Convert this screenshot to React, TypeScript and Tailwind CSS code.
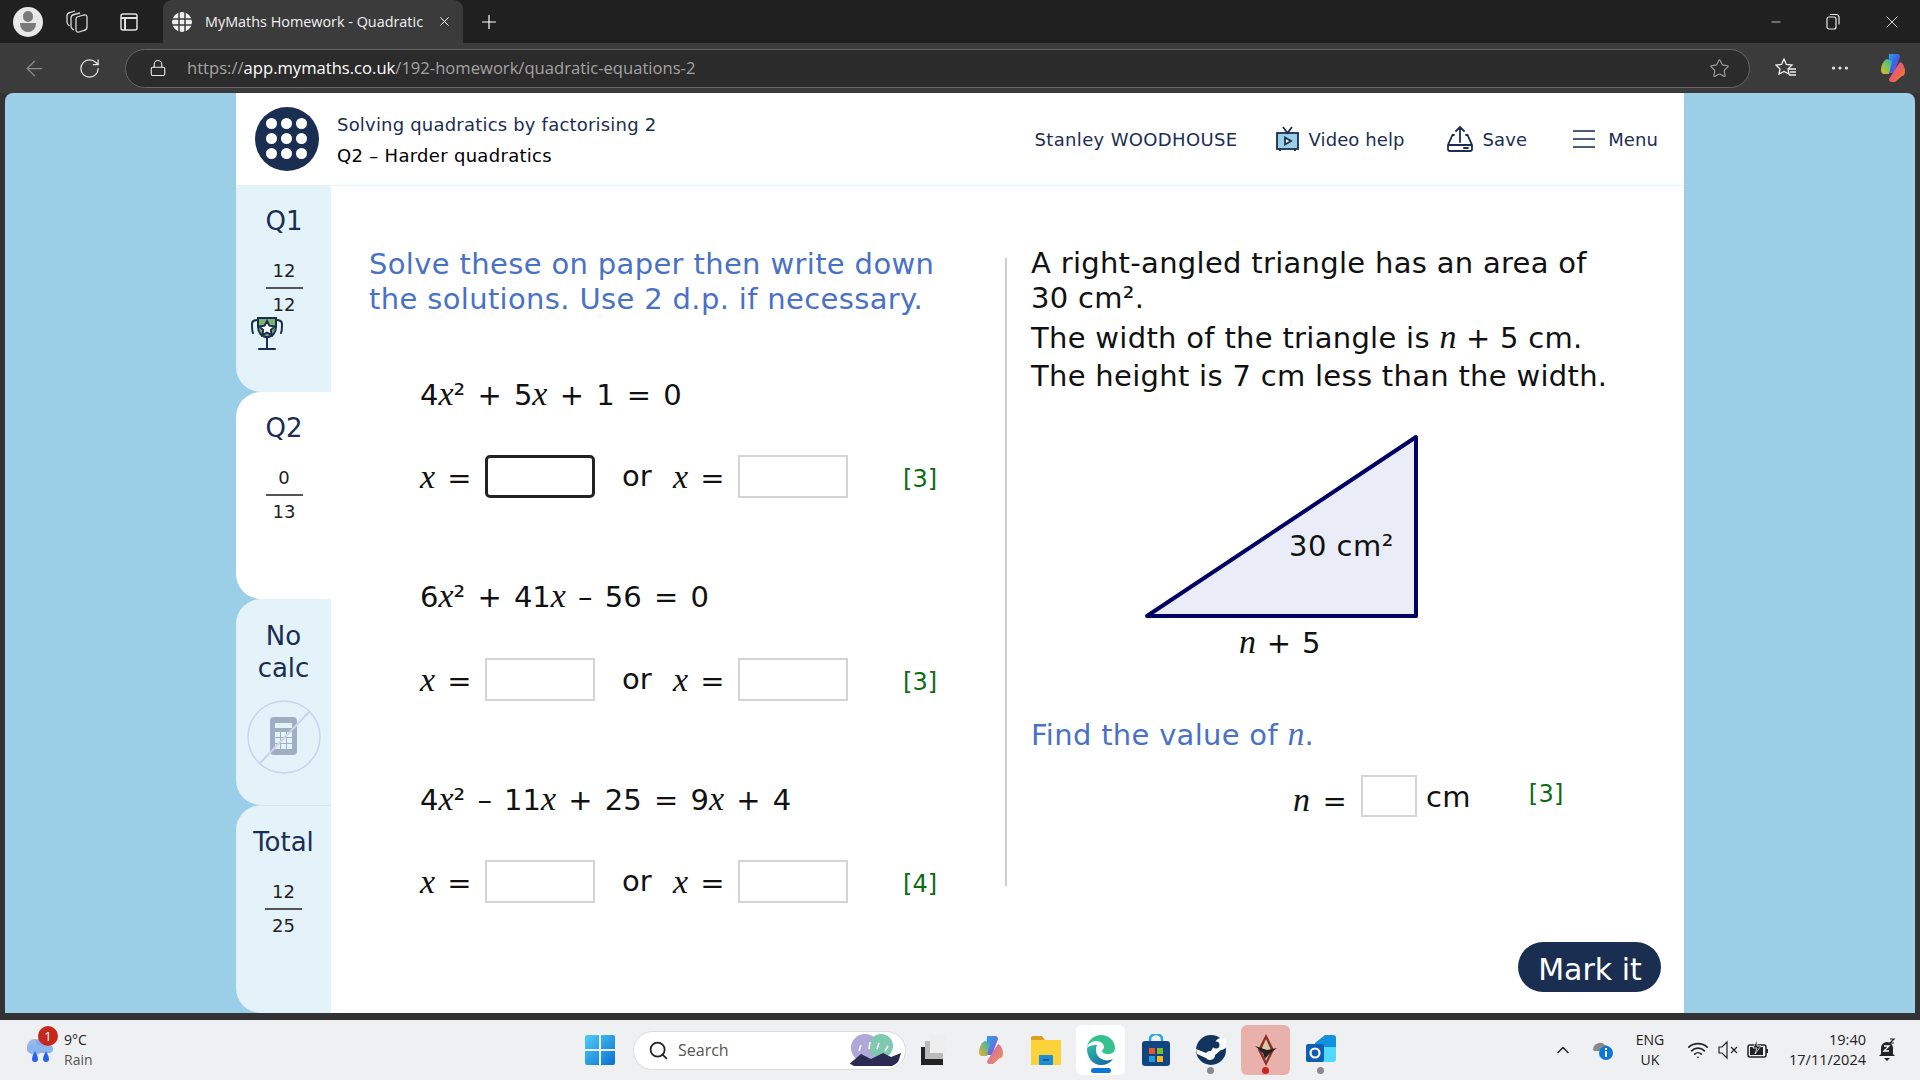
import React from 'react';
import { ArrowLeft, RotateCw, Lock, Star, Plus, X, Minus, MoreHorizontal, Search, ChevronUp, Wifi } from 'lucide-react';

const pageFont = "font-['DejaVu_Sans',sans-serif]";
const chromeFont = "font-['Open_Sans',sans-serif]";

// italic variable letter used in the maths
const V = ({ children }: { children: React.ReactNode }) => (
  <i className="font-['Liberation_Serif',serif] italic text-[34px] tracking-normal">{children}</i>
);

const Fraction = ({ top, bottom }: { top: string; bottom: string }) => (
  <div className="flex flex-col items-center text-[18px] text-[#222] leading-[24px]">
    <span>{top}</span>
    <div className="w-[37px] h-[2px] my-[4px] bg-[#555]" />
    <span>{bottom}</span>
  </div>
);

const Answer = ({ focused }: { focused?: boolean }) => (
  <div className={focused
    ? "w-[110px] h-[43px] bg-white rounded-[5px] border-[3px] border-[#222]"
    : "w-[110px] h-[43px] bg-white border-2 border-[#d4d4d4]"} />
);

const AnswerRow = ({ marks, focused, className }: { marks: number; focused?: boolean; className: string }) => (
  <div className={`flex items-center text-[29px] text-[#111] h-[43px] ${className}`}>
    <span className="w-[65px] whitespace-pre [word-spacing:3px]"><V>x</V> =</span>
    <Answer focused={focused} />
    <span className="ml-[27px] w-[51px]">or</span>
    <span className="w-[65px] whitespace-pre [word-spacing:3px]"><V>x</V> =</span>
    <Answer />
    <span className="ml-[55px] mt-[5px] text-[24px] text-[#0b6b12]">[{marks}]</span>
  </div>
);

const Equation = ({ children, className }: { children: React.ReactNode; className: string }) => (
  <div className={`h-[40px] leading-[40px] text-[29px] text-[#111] whitespace-pre [word-spacing:3px] ${className}`}>{children}</div>
);

const TrophyIcon = () => (
  <svg width="34" height="34" viewBox="0 0 34 34" fill="none" stroke="#1a2e52" strokeWidth="2" strokeLinecap="round">
    <path d="M8 1h18v9c0 6-4 10-9 10s-9-4-9-10z" fill="#7db46c" />
    <path d="M8 3C4 3 2 4 2 7c0 4 0 7 1 9M26 3c4 0 6 1 6 4 0 4 0 7-1 9M17 20v11M9 32h16" />
    <path d="M17 4l2.400 4.700 5.100.7-3.700 3.600.9 5.100-4.700-2.400-4.700 2.400.9-5.100-3.700-3.600 5.100-.7z" fill="#fff" />
  </svg>
);

const NoCalcIcon = () => (
  <svg width="76" height="76" viewBox="0 0 76 76" fill="none">
    <circle cx="38" cy="38" r="36" stroke="#ccd3ea" strokeWidth="1.500" />
    <rect x="24" y="18" width="27" height="38" rx="4" fill="#a0aec2" />
    <rect x="29" y="24" width="17" height="5" fill="#e4f2f9" />
    {[33, 39, 45].map((y) => [29, 35, 41].map((x) => (
      <rect key={`${x}-${y}`} x={x} y={y} width="5" height="5" fill="#e4f2f9" />
    )))}
    <path d="M14 64L64 12" stroke="#ccd3ea" strokeWidth="2" />
  </svg>
);

const Sidebar = () => (
  <div className="w-[95px] shrink-0 flex flex-col bg-[#9bcfe8] text-[#1a2e52] text-[26px] text-center">
    <div className="h-[206px] bg-[#e4f2f9] rounded-bl-[25px] flex flex-col items-center pt-[17px]">
      <div className="leading-[36px] pl-[1px]">Q1</div>
      <div className="mt-[20px] pl-[1px]"><Fraction top="12" bottom="12" /></div>
      <div className="self-start ml-[14px]"><TrophyIcon /></div>
    </div>
    <div className="h-[207px] bg-white rounded-l-[25px] flex flex-col items-center pt-[18px]">
      <div className="leading-[36px] pl-[1px]">Q2</div>
      <div className="mt-[20px] pl-[1px]"><Fraction top="0" bottom="13" /></div>
    </div>
    <div className="h-[207px] bg-[#e4f2f9] rounded-l-[25px] flex flex-col items-center pt-[21px]">
      <div className="leading-[32px]">No<br />calc</div>
      <div className="mt-[15px]"><NoCalcIcon /></div>
    </div>
    <div className="h-[208px] bg-[#e4f2f9] rounded-l-[25px] border-t border-[#d5e6f0] flex flex-col items-center pt-[18px]">
      <div className="leading-[36px]">Total</div>
      <div className="mt-[20px]"><Fraction top="12" bottom="25" /></div>
    </div>
  </div>
);

const PanelHeader = () => (
  <div className="h-[93px] border-b border-[#e4f2f9] flex items-center text-[#1a2e52] text-[18px] tracking-[0.2px]">
    <div className="ml-[19px] w-[64px] h-[64px] rounded-full bg-[#1a2e52] grid grid-cols-3 gap-[3px] p-[11px]">
      {Array.from({ length: 9 }).map((_, i) => <div key={i} className="rounded-full bg-white w-[11px] h-[11px]" />)}
    </div>
    <div className="ml-[18px] mt-[2px] flex flex-col gap-[9px] leading-[22px]">
      <span>Solving quadratics by factorising 2</span>
      <span className="text-black tracking-[0.3px]">Q2 – Harder quadratics</span>
    </div>
    <div className="ml-auto mr-[26px] flex items-center tracking-[0.1px]">
      <span className="tracking-[0.35px]">Stanley WOODHOUSE</span>
      <svg className="ml-[37px]" width="25" height="26" viewBox="0 0 25 26" fill="none" stroke="#1a2e52" strokeWidth="1.800">
        <rect x="2" y="7" width="21" height="16" fill="#9bcfe8" />
        <path d="M8 1l4.500 6L17 1M5 23v2M20 23v2" />
        <path d="M10 11.500l6 3.500-6 3.500z" fill="#fff" />
      </svg>
      <span className="ml-[9px]">Video help</span>
      <svg className="ml-[41px]" width="28" height="26" viewBox="0 0 28 26" fill="none" stroke="#1a2e52" strokeWidth="1.800" strokeLinecap="round">
        <path d="M8 9H6.500L2 19v4c0 1 1 2 2 2h20c1 0 2-1 2-2v-4L21.500 9H20M2 19h24M14 16V1M10 5l4-4 4 4" />
        <path d="M18 22h4" />
      </svg>
      <span className="ml-[9px]">Save</span>
      <svg className="ml-[45px]" width="24" height="20" viewBox="0 0 24 20" fill="none" stroke="#4a5b78" strokeWidth="2">
        <path d="M1 2h22M1 10h22M1 18h22" />
      </svg>
      <span className="ml-[12px]">Menu</span>
    </div>
  </div>
);

const Question = () => (
  <div className="flex-1 flex flex-col justify-between pb-[21px] pr-[23px]">
    <div className="flex items-start">
      <div className="w-[674px] shrink-0 pl-[38px] pt-[61px]">
        <p className="text-[29px] tracking-[0.35px] leading-[35px] text-[#4a72c4]">
          Solve these on paper then write down<br />the solutions. Use 2 d.p. if necessary.
        </p>
        <div className="pl-[51px]">
          <Equation className="mt-[57px]">4<V>x</V>² + 5<V>x</V> + 1 = 0</Equation>
          <AnswerRow className="mt-[41px]" marks={3} focused />
          <Equation className="mt-[78px]">6<V>x</V>² + 41<V>x</V> – 56 = 0</Equation>
          <AnswerRow className="mt-[42px]" marks={3} />
          <Equation className="mt-[78px]">4<V>x</V>² – 11<V>x</V> + 25 = 9<V>x</V> + 4</Equation>
          <AnswerRow className="mt-[41px]" marks={4} />
        </div>
      </div>
      <div className="w-[2px] h-[628px] mt-[72px] bg-[#cfcfcf]" />
      <div className="flex-1 pl-[24px] pt-[60px] text-[29px] tracking-[0.3px] text-[#111]">
        <p className="leading-[35px]">A right-angled triangle has an area of<br />30 cm².</p>
        <p className="mt-[2px] leading-[38px]">The width of the triangle is <V>n</V> + 5 cm.<br />The height is 7 cm less than the width.</p>
        <svg className="ml-[110px] mt-[36px] block" width="290" height="236" viewBox="0 0 290 236">
          <path d="M6 185L275 6V185Z" fill="#eaedf7" stroke="#000060" strokeWidth="4" strokeLinejoin="round" />
          <text x="148" y="125" fontSize="29" letterSpacing="0.5" fill="#111">30 cm²</text>
          <text x="98" y="222" fontSize="29" fill="#111" wordSpacing="1">
            <tspan fontFamily="Liberation Serif" fontStyle="italic" fontSize="34">n</tspan> + 5
          </text>
        </svg>
        <p className="mt-[49px] leading-[35px] text-[#4a72c4]">Find the value of <V>n</V>.</p>
        <div className="mt-[22px] ml-[262px] flex items-center h-[42px]">
          <span className="w-[68px] pt-[6px] whitespace-pre [word-spacing:3px]"><V>n</V> =</span>
          <div className="w-[56px] h-[42px] border-2 border-[#d4d4d4]" />
          <span className="ml-[9px] pt-[3px]">cm</span>
          <span className="ml-[58px] -mt-[5px] text-[24px] text-[#0b6b12]">[3]</span>
        </div>
      </div>
    </div>
    <button className="self-end w-[143px] h-[50px] pt-[3px] pl-[1px] rounded-full bg-[#1a2e52] text-white text-[30px] leading-[50px]">Mark it</button>
  </div>
);

const TabStrip = () => (
  <div className={`h-[43px] bg-[#202020] flex items-end text-white ${chromeFont}`}>
    <div className="self-center ml-[13px] w-[30px] h-[30px] rounded-full bg-[#e8e8e8] flex flex-col items-center justify-center gap-[1px] overflow-hidden">
      <div className="w-[10px] h-[11px] rounded-full bg-[#7a7a7a]" />
      <div className="w-[16px] h-[9px] rounded-b-full bg-[#7a7a7a]" />
    </div>
    <svg className="self-center ml-[23px]" width="22" height="24" viewBox="0 0 22 24" fill="none" stroke="#d6d6d6" strokeWidth="1.300">
      <path d="M11 7l7-2c2-.5 3 .5 3 2v10c0 2-1 3-3 3.500L13 22c-1.500.5-3-.5-3-2V9c0-1 .5-1.700 1-2z" />
      <path d="M8 20c-2-1-3-2-3-4V8c0-2 1-3 3-3.500L14 3" />
      <path d="M3.500 16C2 15 1 14 1 12V6c0-2 1-3 3-3.500L9 1" />
    </svg>
    <svg className="self-center ml-[31px]" width="20" height="20" viewBox="0 0 20 20" fill="none" stroke="#e0e0e0" strokeWidth="1.500">
      <rect x="2" y="2" width="16" height="16" rx="2" />
      <path d="M2 6h16M6 6v12" strokeWidth="2" />
    </svg>
    <div className="ml-[24px] w-[300px] h-[43px] bg-[#3b3b3b] rounded-t-[9px] flex items-center">
      <svg className="ml-[9px]" width="20" height="20" viewBox="0 0 20 20">
        <circle cx="10" cy="10" r="10" fill="#f0f0f0" />
        <path d="M7 0v20M13 0v20M0 7h20M0 13h20" stroke="#3b3b3b" strokeWidth="1.500" />
      </svg>
      <span className="ml-[13px] w-[221px] text-[14.400px] whitespace-nowrap text-[#f2f2f2]">MyMaths Homework - Quadratic</span>
      <X className="ml-[11px]" size={15} strokeWidth={1.500} />
    </div>
    <Plus className="self-center ml-[15px]" size={22} strokeWidth={1.300} />
    <div className="self-center ml-auto flex items-center">
      <Minus size={14} strokeWidth={1.200} className="mr-[43px]" />
      <svg className="mr-[42px]" width="14" height="18" viewBox="0 0 14 18" fill="none" stroke="#e8e8e8" strokeWidth="1.200">
        <rect x="1" y="4" width="9" height="12" rx="2" />
        <path d="M4 1.500h6c2 0 3 1 3 3v7" />
      </svg>
      <X size={20} strokeWidth={1} className="mr-[18px]" />
    </div>
  </div>
);

const Toolbar = () => (
  <div className={`h-[50px] bg-[#3b3b3b] flex items-center text-[#e8e8e8] ${chromeFont}`}>
    <ArrowLeft className="ml-[22px] shrink-0 text-[#8a8a8a]" size={25} strokeWidth={1.200} />
    <RotateCw className="ml-[31px] shrink-0" size={23} strokeWidth={1.300} />
    <div className="ml-[24px] w-[1625px] shrink-0 h-[39px] rounded-full bg-[#2b2b2b] border border-[#666] flex items-center">
      <Lock className="ml-[23px]" size={18} strokeWidth={1.500} />
      <div className="ml-[20px] text-[16.600px] text-[#a3a3a3] whitespace-nowrap">
        https://<span className="text-white">app.mymaths.co.uk</span>/192-homework/quadratic-equations-2
      </div>
      <Star className="ml-auto mr-[19px] text-[#a0a0a0]" size={21} strokeWidth={1.300} />
    </div>
    <svg className="ml-[25px] shrink-0" width="22" height="22" viewBox="0 0 22 22" fill="none" stroke="#f0f0f0" strokeWidth="1.300">
      <path d="M9 2l2.400 5.500 5.600.5-4 4 1 5-5-2.500L4 17l1-5-4-4 5.500-.5zM14 12h7M15 15h6M14 18h7" />
    </svg>
    <MoreHorizontal className="ml-[32px] shrink-0" size={22} strokeWidth={1.500} />
    <svg className="ml-[29px] shrink-0" width="26" height="30" viewBox="0 0 26 30">
      <defs>
        <linearGradient id="cpA" x1="0" y1="0" x2="1" y2="1"><stop offset="0" stopColor="#2aa7f0" /><stop offset=".5" stopColor="#3f5fe0" /><stop offset="1" stopColor="#a24fd0" /></linearGradient>
        <linearGradient id="cpB" x1="0" y1="1" x2="1" y2="0"><stop offset="0" stopColor="#f2b21f" /><stop offset=".5" stopColor="#7cc65a" /><stop offset="1" stopColor="#21b3c9" /></linearGradient>
        <linearGradient id="cpC" x1="0" y1="0" x2="1" y2="1"><stop offset="0" stopColor="#c45bd8" /><stop offset=".6" stopColor="#f0604f" /><stop offset="1" stopColor="#f59a3a" /></linearGradient>
      </defs>
      <path d="M9 1h8c2 0 3 1 3 3L14 20H8z" fill="url(#cpA)" />
      <path d="M7 6c-3 1-6 6-6 11 0 2 1 4 3 4h5L12 8z" fill="url(#cpB)" />
      <path d="M20 9c3 1 5 5 5 9 0 3-1 5-3 5L15 29h-4c-1 0-2-1-2-3z" fill="url(#cpC)" />
    </svg>
  </div>
);

const WinLogo = () => (
  <svg width="30" height="30" viewBox="0 0 30 30">
    <defs><linearGradient id="wl" x1="0" y1="0" x2="1" y2="1"><stop offset="0" stopColor="#4fcdf7" /><stop offset="1" stopColor="#0a6fd0" /></linearGradient></defs>
    <path d="M0 2a2 2 0 012-2h12v14H0zM16 0h12a2 2 0 012 2v12H16zM0 16h14v14H2a2 2 0 01-2-2zM16 16h14v12a2 2 0 01-2 2H16z" fill="url(#wl)" />
  </svg>
);

const Dot = ({ color }: { color: string }) => <div className={`w-[7px] h-[7px] rounded-full ${color}`} />;

const TaskIcon = ({ children, className, under }: { children: React.ReactNode; className?: string; under?: React.ReactNode }) => (
  <div className={`w-[49px] h-[50px] shrink-0 rounded-[6px] flex flex-col items-center pt-[9px] ${className ?? ''}`}>
    <div className="h-[32px] flex items-center">{children}</div>
    <div className="h-[7px] mt-[1px] flex items-center justify-center">{under}</div>
  </div>
);

const Taskbar = () => (
  <div className={`h-[60px] bg-[#eff0f2] flex items-center text-[#222] ${chromeFont}`}>
    <div className="relative ml-[25px] w-[30px] h-[30px] shrink-0">
      <svg width="30" height="30" viewBox="0 0 30 30">
        <circle cx="10" cy="12" r="8" fill="#9db8e8" />
        <circle cx="18" cy="9" r="7" fill="#8aa6e6" />
        <rect x="2" y="10" width="26" height="8" rx="4" fill="#8cb4ee" />
        <path d="M10 16c2 4 3 6 3 8a3 3 0 01-6 0c0-2 1-4 3-8zM21 16c2 4 3 6 3 8a3 3 0 01-6 0c0-2 1-4 3-8z" fill="#2563eb" />
      </svg>
      <div className="absolute -top-[9px] left-[13px] w-[20px] h-[20px] rounded-full bg-[#c4281c] text-white text-[13px] leading-[20px] text-center">1</div>
    </div>
    <div className="ml-[9px] w-[32px] flex flex-col text-[14px] leading-[20px] shrink-0">
      <span>9°C</span>
      <span className="text-[#555]">Rain</span>
    </div>
    <div className="ml-[489px] shrink-0"><WinLogo /></div>
    <div className="ml-[18px] w-[273px] h-[39px] shrink-0 rounded-full bg-white border border-[#dcdcdc] flex items-center">
      <Search className="ml-[14px] text-[#222]" size={21} strokeWidth={2} />
      <span className="ml-[9px] text-[16px] text-[#555]">Search</span>
      <svg className="ml-auto mr-[2px] rounded-full" width="60" height="34" viewBox="0 0 60 34">
        <circle cx="22" cy="15" r="14" fill="#b0a8d8" />
        <circle cx="38" cy="13" r="12" fill="#7ec9b0" />
        <path d="M16 18l2-6M26 16l1-7M34 16l2-6M42 18l3-5" stroke="#fff" strokeWidth="1.500" />
        <path d="M4 33l14-12 10 5 12-6 8 4 10-4-4 13z" fill="#2a2a52" />
      </svg>
    </div>
    <svg className="ml-[15px] shrink-0" width="26" height="30" viewBox="0 0 26 30">
      <rect x="0" y="12" width="22" height="18" fill="#222" />
      <rect x="4" y="6" width="18" height="18" fill="#bbb" />
      <rect x="9" y="0" width="16" height="18" fill="#eee" />
    </svg>
    <div className="ml-[19px] flex items-center gap-[6px] shrink-0">
      <TaskIcon>
        <svg width="26" height="30" viewBox="0 0 26 30">
          <defs>
            <linearGradient id="tcA" x1="0" y1="0" x2="1" y2="1"><stop offset="0" stopColor="#2aa7f0" /><stop offset="1" stopColor="#8a4fd0" /></linearGradient>
            <linearGradient id="tcB" x1="0" y1="1" x2="1" y2="0"><stop offset="0" stopColor="#f2b21f" /><stop offset="1" stopColor="#21b3c9" /></linearGradient>
            <linearGradient id="tcC" x1="0" y1="0" x2="1" y2="1"><stop offset="0" stopColor="#c45bd8" /><stop offset="1" stopColor="#f59a3a" /></linearGradient>
          </defs>
          <path d="M9 1h8c2 0 3 1 3 3L14 20H8z" fill="url(#tcA)" />
          <path d="M7 6c-3 1-6 6-6 11 0 2 1 4 3 4h5L12 8z" fill="url(#tcB)" />
          <path d="M20 9c3 1 5 5 5 9 0 3-1 5-3 5L15 29h-4c-1 0-2-1-2-3z" fill="url(#tcC)" />
        </svg>
      </TaskIcon>
      <TaskIcon>
        <svg width="32" height="30" viewBox="0 0 32 30">
          <path d="M1 3a2 2 0 012-2h9l3 4H1z" fill="#d9a21a" />
          <rect x="1" y="5" width="30" height="25" rx="1" fill="#fbd239" />
          <rect x="9" y="20" width="14" height="10" rx="1" fill="#1a8fd6" />
          <rect x="13" y="24" width="6" height="1.500" fill="#0b4f85" />
        </svg>
      </TaskIcon>
      <TaskIcon className="bg-white" under={<div className="w-[20px] h-[5px] rounded-full bg-[#0a78d4]" />}>
        <svg width="30" height="32" viewBox="0 0 30 32">
          <defs><linearGradient id="edg" x1="0" y1="0" x2="1" y2="1"><stop offset="0" stopColor="#35c1a6" /><stop offset="1" stopColor="#0c59a4" /></linearGradient></defs>
          <path d="M15 1c8 0 14 6 14 13 0 4-3 6-7 6-3 0-6-1-6-3 0-1 2-2 2-4 0-3-3-6-8-6-4 0-8 3-9 6C2 6 8 1 15 1z" fill="#34c38f" />
          <path d="M1 15c0 9 6 16 14 16 5 0 9-2 12-6-4 2-9 2-13-1-4-3-5-8-3-13C6 11 1 12 1 15z" fill="url(#edg)" />
        </svg>
      </TaskIcon>
      <TaskIcon>
        <svg width="30" height="32" viewBox="0 0 30 32">
          <path d="M9 8V5a6 5 0 0112 0v3" fill="none" stroke="#2aa7e0" strokeWidth="2.500" />
          <rect x="1" y="7" width="28" height="25" rx="3" fill="#12447e" />
          <rect x="8" y="14" width="6" height="6" fill="#e8552c" />
          <rect x="16" y="14" width="6" height="6" fill="#7bb92f" />
          <rect x="8" y="22" width="6" height="6" fill="#1e9be0" />
          <rect x="16" y="22" width="6" height="6" fill="#f5b91c" />
        </svg>
      </TaskIcon>
      <TaskIcon under={<Dot color="bg-[#8a8a8a]" />}>
        <svg width="30" height="30" viewBox="0 0 30 30">
          <circle cx="15" cy="15" r="15" fill="#12345e" />
          <path d="M1 19l9 4a5 5 0 009-3l6-5a6 6 0 10-6-6l-4 7a5 5 0 00-5 2L0 14z" fill="#fff" />
          <circle cx="20" cy="10" r="3.500" fill="#12345e" />
        </svg>
      </TaskIcon>
      <TaskIcon className="bg-[#e8b1ac]" under={<Dot color="bg-[#c4281c]" />}>
        <svg width="24" height="32" viewBox="0 0 24 32">
          <path d="M12 0l8 16-8 16-8-16z" fill="#8c2f2a" />
          <path d="M12 5l5 11-5 11-5-11z" fill="#d6c7a8" />
          <path d="M1 12l12 4 10-2-8 6-4 5-2-6z" fill="#222" />
        </svg>
      </TaskIcon>
      <TaskIcon under={<Dot color="bg-[#8a8a8a]" />}>
        <svg width="32" height="30" viewBox="0 0 32 30">
          <path d="M10 8L20 0h8a3 3 0 013 3v20a3 3 0 01-3 3H10z" fill="#1490df" />
          <path d="M18 12h13v12a3 3 0 01-3 3H14z" fill="#50d9ff" />
          <rect x="1" y="9" width="18" height="18" rx="2" fill="#0f5fb0" />
          <circle cx="10" cy="18" r="4.500" fill="none" stroke="#fff" strokeWidth="2.200" />
        </svg>
      </TaskIcon>
    </div>
    <ChevronUp className="ml-[208px] shrink-0" size={20} strokeWidth={1.800} />
    <svg className="ml-[18px] shrink-0" width="22" height="24" viewBox="0 0 22 24">
      <path d="M2 12a7 7 0 0112-5 5 5 0 015 6H4a3 3 0 01-2-1z" fill="#8a8a8a" />
      <circle cx="15" cy="15" r="7" fill="#0a78d4" />
      <rect x="14" y="13" width="2" height="6" fill="#fff" />
      <rect x="14" y="10" width="2" height="2" fill="#fff" />
    </svg>
    <div className="ml-[20px] w-[34px] shrink-0 flex flex-col items-center text-[14px] leading-[20px]">
      <span>ENG</span>
      <span>UK</span>
    </div>
    <Wifi className="ml-[20px] shrink-0" size={22} strokeWidth={1.800} />
    <svg className="ml-[9px] shrink-0" width="20" height="20" viewBox="0 0 20 20" fill="none" stroke="#222" strokeWidth="1.200">
      <path d="M1 7h3l5-5v16l-5-5H1zM13 7l6 6M19 7l-6 6" />
    </svg>
    <svg className="ml-[9px] shrink-0" width="22" height="20" viewBox="0 0 22 20">
      <rect x="1" y="5" width="18" height="12" rx="2" fill="none" stroke="#222" strokeWidth="1.500" />
      <rect x="3" y="7" width="13" height="8" fill="#222" />
      <rect x="19" y="9" width="2" height="4" fill="#222" />
      <path d="M10 0L6 8h4l-2 6 6-8h-4z" fill="#222" stroke="#eff0f2" strokeWidth=".8" />
    </svg>
    <div className="ml-auto shrink-0 flex flex-col items-end text-[14.500px] leading-[20px]">
      <span>19:40</span>
      <span>17/11/2024</span>
    </div>
    <svg className="ml-[12px] mr-[24px] shrink-0" width="18" height="24" viewBox="0 0 18 24">
      <path d="M9 4a6 6 0 016 6v6l2 2H1l2-2v-6a6 6 0 016-6zM6 20h6l-3 3z" fill="#222" />
      <path d="M6 8h5l-5 5h5" fill="none" stroke="#fff" strokeWidth="1.300" />
      <path d="M12 1h4l-4 4h4" fill="none" stroke="#222" strokeWidth="1.200" />
    </svg>
  </div>
);

export default function App() {
  return (
    <div className={`w-[1920px] h-[1080px] overflow-hidden flex flex-col bg-[#333] ${pageFont}`}>
      <TabStrip />
      <Toolbar />
      <div className="flex-1 min-h-0 px-[5px] pb-[7px]">
        <div className="h-full bg-[#9bcfe8] rounded-t-[8px] flex justify-center">
          <div className="w-[1448px] h-full bg-white flex flex-col">
            <PanelHeader />
            <div className="flex-1 min-h-0 flex">
              <Sidebar />
              <Question />
            </div>
          </div>
        </div>
      </div>
      <Taskbar />
    </div>
  );
}
